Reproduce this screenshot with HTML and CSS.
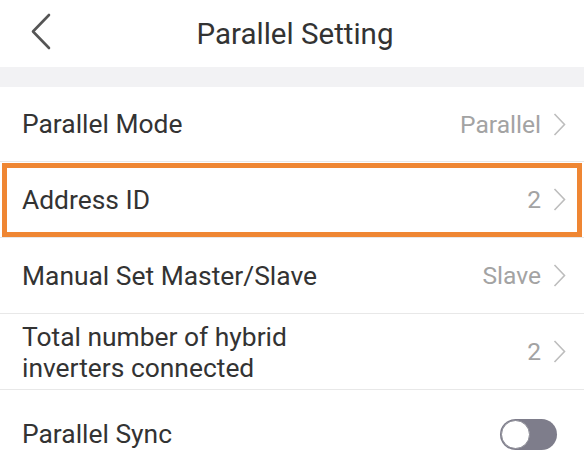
FILE: index.html
```html
<!DOCTYPE html>
<html>
<head>
<meta charset="utf-8">
<link rel="stylesheet" href="styles.css">
</head>
<body>
<div class="screen">
  <header class="topbar">
    <span class="back">
      <svg width="22" height="37" viewBox="0 0 22 37"><path d="M19 2 L3 18.5 L19 35" fill="none" stroke="#555" stroke-width="2.6" stroke-linecap="round" stroke-linejoin="round"/></svg>
    </span>
    <h1 class="title">Parallel Setting</h1>
  </header>
  <div class="band"></div>
  <ul class="list">
    <li class="row">
      <span class="label">Parallel Mode</span>
      <span class="value">Parallel<svg class="chev" width="13" height="23" viewBox="0 0 13 23"><path d="M1.5 1 L11.5 11.5 L1.5 22" fill="none" stroke="#bdbdbd" stroke-width="1.6"/></svg></span>
    </li>
    <li class="row highlight">
      <span class="label">Address ID</span>
      <span class="value">2<svg class="chev" width="13" height="23" viewBox="0 0 13 23"><path d="M1.5 1 L11.5 11.5 L1.5 22" fill="none" stroke="#bdbdbd" stroke-width="1.6"/></svg></span>
    </li>
    <li class="row">
      <span class="label">Manual Set Master/Slave</span>
      <span class="value">Slave<svg class="chev" width="13" height="23" viewBox="0 0 13 23"><path d="M1.5 1 L11.5 11.5 L1.5 22" fill="none" stroke="#bdbdbd" stroke-width="1.6"/></svg></span>
    </li>
    <li class="row">
      <span class="label two">Total number of hybrid<br>inverters connected</span>
      <span class="value">2<svg class="chev" width="13" height="23" viewBox="0 0 13 23"><path d="M1.5 1 L11.5 11.5 L1.5 22" fill="none" stroke="#bdbdbd" stroke-width="1.6"/></svg></span>
    </li>
    <li class="row last">
      <span class="label">Parallel Sync</span>
      <span class="toggle"><span class="knob"></span></span>
    </li>
  </ul>
</div>
</body>
</html>
```
FILE: styles.css
```css
* { box-sizing: border-box; }
html, body { margin: 0; padding: 0; background: #fff; }
body {
  font-family: Roboto, "Noto Sans", "Liberation Sans", sans-serif;
  color: #333;
  width: 584px;
  height: 464px;
  overflow: hidden;
}
.topbar {
  height: 67px;
  display: flex;
  align-items: center;
  justify-content: center;
  position: relative;
}
.back {
  position: absolute;
  left: 30px;
  top: 13px;
  display: flex;
}
.title {
  margin: 0;
  font-size: 29.5px;
  font-weight: 400;
  color: #333;
  padding-left: 6px;
}
.band {
  height: 20px;
  background: #f2f2f4;
}
.list {
  list-style: none;
  margin: 0;
  padding: 0;
}
.row {
  height: 76px;
  display: flex;
  align-items: center;
  justify-content: space-between;
  padding: 0 18px 0 22px;
  border-bottom: 1px solid #e8e8e8;
  font-size: 26.4px;
  position: relative;
}
.row:first-child { height: 75px; }
.row.last { border-bottom: none; height: 84px; padding-top: 4px; }
.label { color: #333; }
.label.two { line-height: 31px; padding-top: 2px; }
.value {
  display: flex;
  align-items: center;
  color: #a3a3a3;
  font-size: 24.6px;
  gap: 12px;
}
.chev { display: block; }
.highlight::after {
  content: "";
  position: absolute;
  left: 2px;
  right: 2px;
  top: 1px;
  bottom: 0;
  border: 5px solid #ef8633;
}
.toggle {
  width: 57px;
  height: 31px;
  border-radius: 16px;
  background: #7e7d8b;
  margin-right: 9px;
  position: relative;
  display: block;
}
.knob {
  position: absolute;
  left: 1px;
  top: 1px;
  width: 29px;
  height: 29px;
  border-radius: 50%;
  background: #fff;
  border: 1.5px solid #8a8a94;
}
```
